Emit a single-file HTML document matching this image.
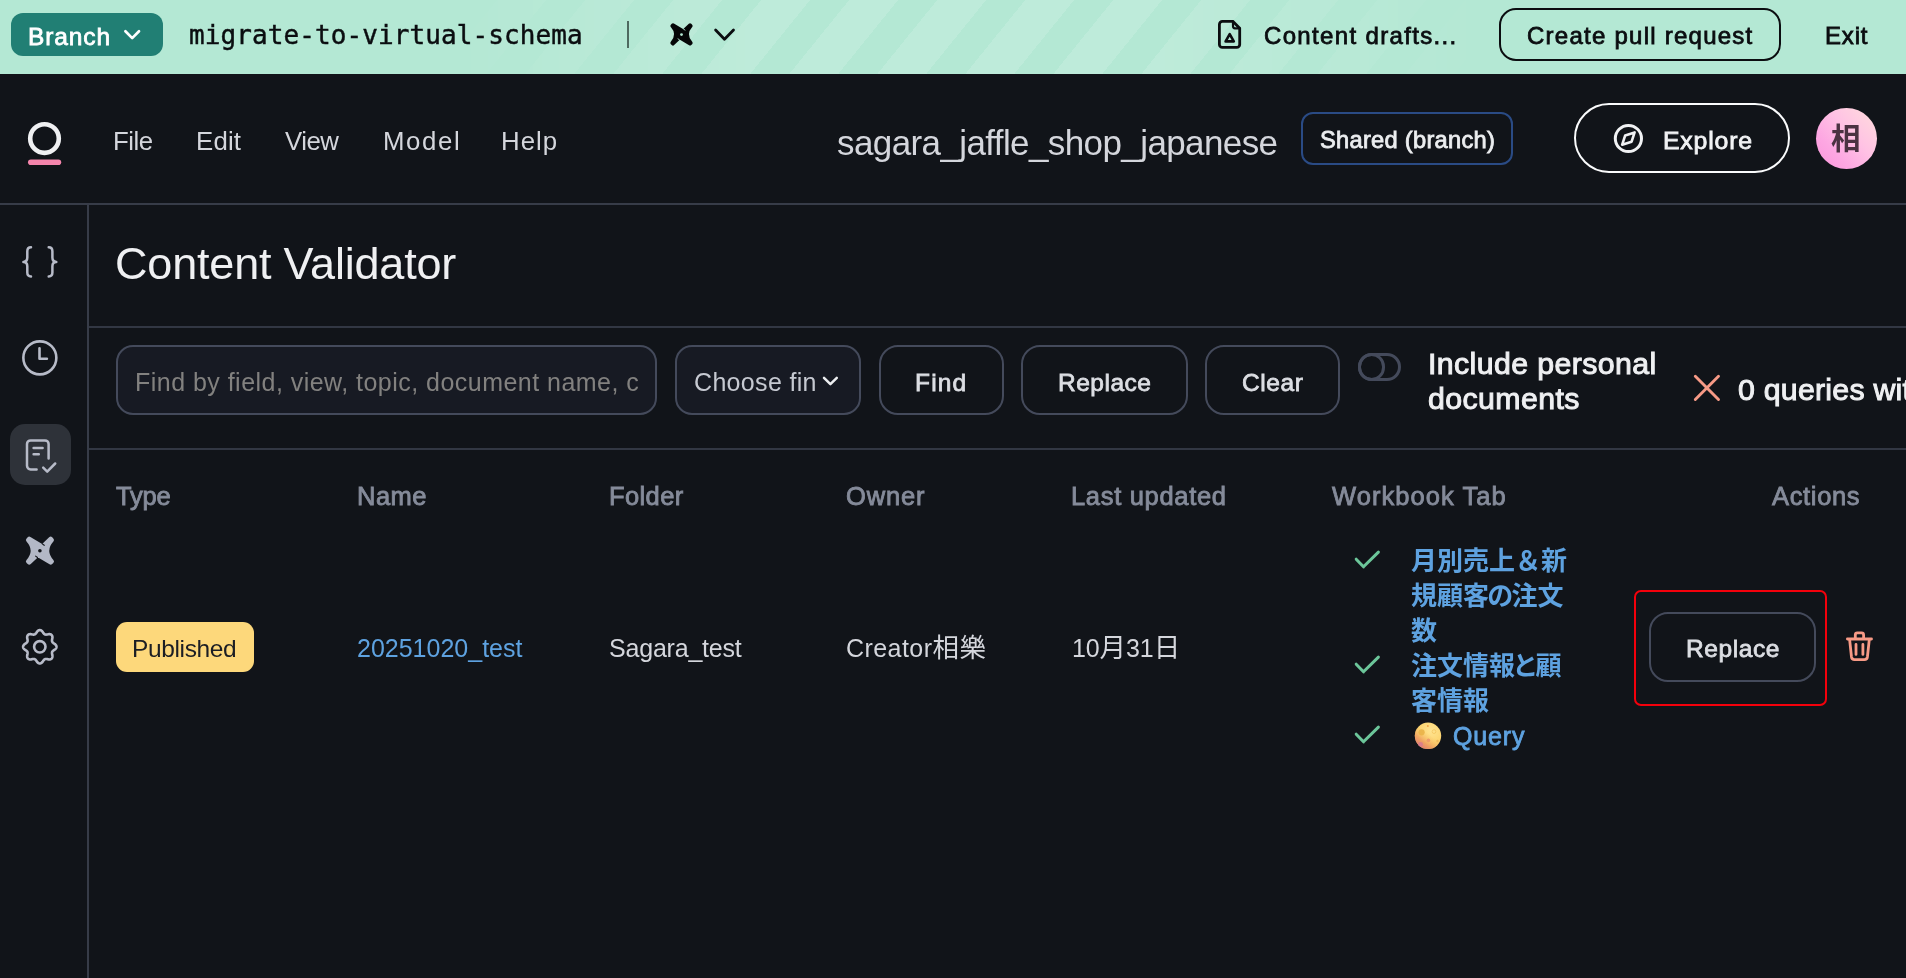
<!DOCTYPE html>
<html lang="en">
<head>
<meta charset="utf-8">
<title>Content Validator</title>
<style>
*{box-sizing:border-box;margin:0;padding:0}
html,body{width:1906px;height:978px;overflow:hidden;background:#111419}
body{font-family:"Liberation Sans","Noto Sans CJK JP",sans-serif;color:#e6e7ea;position:relative}
.abs{position:absolute;white-space:nowrap}
[id^=t_]{will-change:transform}
svg{position:absolute;left:0;top:0;overflow:visible}
.sb{font-weight:normal !important;-webkit-text-stroke:0.033em currentColor}
/* top branch bar */
#bar{position:absolute;left:0;top:0;width:1906px;height:74px;background:#b4e8d4;overflow:hidden}
#bar .stripes{position:absolute;left:440px;top:0;width:1060px;height:74px;
 background:repeating-linear-gradient(129deg,rgba(255,255,255,.14) 0 14px,rgba(255,255,255,0) 14px 44.4px,rgba(255,255,255,.14) 44.4px 68.4px);
 -webkit-mask-image:linear-gradient(90deg,transparent,#000 30%,#000 67%,transparent);mask-image:linear-gradient(90deg,transparent,#000 30%,#000 67%,transparent)}
#branch{position:absolute;left:11px;top:13px;width:152px;height:43px;border-radius:12px;background:#217f74}
#t_branch{left:28px;top:20px;font-weight:bold;font-size:24.5px;line-height:30px;color:#fff}
#t_bname{-webkit-text-stroke:0.45px #0b0d10;left:189px;top:17px;font-family:"DejaVu Sans Mono","Liberation Mono",monospace;font-size:26px;line-height:34px;color:#0b0d10}
#sep{position:absolute;left:626.6px;top:21px;width:2.2px;height:27px;background:#4e6a60}
#t_drafts{left:1264px;top:19px;font-size:24px;line-height:34px;color:#0b0d10;font-weight:bold}
#pr{position:absolute;left:1499px;top:8px;width:282px;height:53px;border:2px solid #0b0d10;border-radius:17px}
#t_pr{left:1527px;top:19px;font-size:24px;line-height:34px;color:#0b0d10;font-weight:bold}
#t_exit{left:1825px;top:19px;font-size:24px;line-height:34px;color:#0b0d10;font-weight:bold}
/* header */
#hdr{position:absolute;left:0;top:74px;width:1906px;height:131px;background:#111419;border-bottom:2px solid #373c48}
.menu{top:123px;font-size:25.5px;line-height:34px;color:#d4d6dc}
#t_title{left:837px;top:120px;font-size:34px;line-height:44px;color:#d4d6dc}
#shared{position:absolute;left:1301px;top:112px;width:212px;height:53px;border:2px solid #2a4b85;border-radius:12px}
#t_shared{left:1320px;top:123px;font-size:23.5px;line-height:30px;font-weight:bold;color:#eceef0}
#explore{position:absolute;left:1574px;top:103px;width:216px;height:70px;border:2px solid #fafbfc;border-radius:35px}
#t_explore{left:1663px;top:122px;font-size:25px;line-height:32px;font-weight:bold;color:#f1f2f4}
#avatar{position:absolute;left:1816px;top:108px;width:61px;height:61px;border-radius:50%;background:linear-gradient(48deg,#fb95db 0%,#fda6e2 28%,#ffc2e4 58%,#ffd4df 85%)}
#t_av{left:1831px;top:120.3px;font-size:29.5px;line-height:38px;color:#4b3242;font-weight:700}
/* sidebar */
#side{position:absolute;left:0;top:205px;width:89px;height:773px;border-right:2px solid #373c48}
#active{position:absolute;left:10px;top:424px;width:61px;height:61px;border-radius:15px;background:#2e3239}
/* content */
#t_incl{left:1427px;top:347px;font-size:30px}
#t_q{left:1736px;top:371px;font-size:30px}
#t_creator{left:846px}
#t_date{left:1071px}
#t_h1{left:114px;top:235px;font-size:44.5px;line-height:56px;color:#eff0f2}
.hr{position:absolute;left:89px;width:1817px;height:2px;background:#323743}
.field{position:absolute;top:345px;height:70px;border:2px solid #444a5b;border-radius:17px;background:#171a23}
.btn{position:absolute;top:345px;height:70px;border:2px solid #444a5b;border-radius:19px}
.bt{top:364px;font-size:25px;line-height:32px;font-weight:bold;color:#dcdee3}
.th{top:478px;font-size:25px;line-height:32px;font-weight:bold;color:#858b9a}
.td{top:631px;font-size:25px;line-height:32px;color:#d4d6dc}
.cj{font-size:26.5px}
.k1{margin:0 -1.8px}.k2{margin:0 -2.8px}
.lnk{font-size:26px;line-height:35px;font-weight:bold;color:#5ea2e0}
/*FIT*/
#t_branch{left:28.0px;top:21.5px;font-size:24.5px;letter-spacing:0.9px}
#t_drafts{left:1264.0px;top:19.4px;font-size:24px;letter-spacing:1.34px}
#t_pr{left:1527.0px;top:19.3px;font-size:24px;letter-spacing:1.25px}
#t_exit{left:1825.0px;top:19.3px;font-size:24px;letter-spacing:0.83px}
#t_shared{left:1320.2px;top:125px;font-size:23.7px;letter-spacing:0.27px}
#t_explore{left:1663.0px;top:125px;font-size:24.8px;letter-spacing:0.83px}
#t_find{left:915.0px;top:366.7px;font-size:24.5px;letter-spacing:1.17px}
#t_replace{left:1058.0px;top:366.7px;font-size:24.5px;letter-spacing:0.5px}
#t_clear{left:1241.5px;top:366.7px;font-size:24.5px;letter-spacing:0.61px}
#t_type{left:116.0px;top:479.5px;font-size:25.5px;letter-spacing:-0.17px}
#t_name{left:356.5px;top:479.5px;font-size:25.5px;letter-spacing:0.5px}
#t_folder{left:608.5px;top:479.5px;font-size:25.5px;letter-spacing:0.4px}
#t_owner{left:846.0px;top:479.5px;font-size:25.5px;letter-spacing:0.86px}
#t_last{left:1071.0px;top:479.5px;font-size:25.5px;letter-spacing:0.69px}
#t_wb{left:1331.5px;top:479.5px;font-size:25.5px;letter-spacing:1.05px}
#t_actions{left:1771.5px;top:479.5px;font-size:25.5px;letter-spacing:0.66px}
#t_query{left:1453.0px;top:718.8px;font-size:25px;letter-spacing:0.86px}
#t_replace2{left:1685.5px;top:632.7px;font-size:24.5px;letter-spacing:0.58px}
#t_incl{left:1428.0px;top:346.3px;font-size:30.3px;letter-spacing:0.4px}
#t_q{left:1737.5px;top:371.9px;font-size:30.3px;letter-spacing:0.24px}
#t_bname{left:189.0px;top:18.1px;font-size:26px;letter-spacing:0.1px}
#t_creator{left:846.0px;top:631.7px;font-size:25px;letter-spacing:0.44px}
#t_date{left:1072.0px;top:631.7px;font-size:25px;letter-spacing:-0.1px}
#t_file{left:113.0px;top:124.2px;font-size:25.8px;letter-spacing:-0.5px}
#t_edit{left:196.0px;top:124.2px;font-size:25.8px;letter-spacing:0.17px}
#t_view{left:285.0px;top:124.2px;font-size:25.8px;letter-spacing:-0.5px}
#t_model{left:382.5px;top:124.2px;font-size:25.8px;letter-spacing:1.62px}
#t_help{left:500.5px;top:124.2px;font-size:25.8px;letter-spacing:1.0px}
#t_title{left:837.0px;top:121px;font-size:35px;letter-spacing:-0.6px}
#t_h1{left:114.5px;top:236.2px;font-size:45px;letter-spacing:-0.19px}
#t_ph{left:134.5px;top:366.2px;font-size:25px;letter-spacing:0.47px}
#t_choose{left:694.0px;top:366.2px;font-size:25px;letter-spacing:0.33px}
#t_pub{left:132.0px;top:633px;font-size:24.5px;letter-spacing:-0.37px}
#t_docname{left:356.5px;top:632px;font-size:25px;letter-spacing:-0.0px}
#t_sagara{left:608.5px;top:632px;font-size:25px;letter-spacing:-0.2px}
/*ENDFIT*/
</style>
</head>
<body>
<div id="bar">
  <div class="stripes"></div>
  <div id="branch"></div>
  <div id="t_branch" class="sb abs">Branch</div>
  <div id="t_bname" class="abs">migrate-to-virtual-schema</div>
  <div id="sep"></div>
  <div id="t_drafts" class="sb abs">Content drafts...</div>
  <div id="pr"></div>
  <div id="t_pr" class="sb abs">Create pull request</div>
  <div id="t_exit" class="sb abs">Exit</div>
</div>
<div id="hdr"></div>
<div id="t_file" class="abs menu">File</div>
<div id="t_edit" class="abs menu">Edit</div>
<div id="t_view" class="abs menu">View</div>
<div id="t_model" class="abs menu">Model</div>
<div id="t_help" class="abs menu">Help</div>
<div id="t_title" class="abs">sagara_jaffle_shop_japanese</div>
<div id="shared"></div>
<div id="t_shared" class="sb abs">Shared (branch)</div>
<div id="explore"></div>
<div id="t_explore" class="sb abs">Explore</div>
<div id="avatar"></div>
<div id="t_av" class="abs">相</div>
<div id="side"></div>
<div id="active"></div>
<div id="t_h1" class="abs">Content Validator</div>
<div class="hr" style="top:326px"></div>
<div class="hr" style="top:448px"></div>
<div class="field" style="left:116px;width:541px"></div>
<div id="t_ph" class="abs" style="line-height:32px;color:#82817f">Find by field, view, topic, document name, c</div>
<div class="field" style="left:675px;width:186px"></div>
<div id="t_choose" class="abs" style="line-height:32px;color:#c6c9d1">Choose fin</div>
<div class="btn" style="left:879px;width:125px"></div>
<div id="t_find" class="sb abs bt">Find</div>
<div class="btn" style="left:1021px;width:167px"></div>
<div id="t_replace" class="sb abs bt">Replace</div>
<div class="btn" style="left:1205px;width:135px"></div>
<div id="t_clear" class="sb abs bt">Clear</div>
<div id="toggle" class="abs" style="left:1358px;top:352.8px;width:43.4px;height:28px;border:3px solid #444a5b;border-radius:14px"></div>
<div class="abs" style="left:1358px;top:352.8px;width:27.2px;height:28px;border:3px solid #444a5b;border-radius:14px"></div>
<div id="t_incl" class="sb abs" style="line-height:35px;font-weight:bold;color:#eff0f2">Include personal<br>documents</div>
<div id="t_q" class="sb abs" style="line-height:36px;font-weight:bold;color:#eff0f2">0 queries with errors</div>
<div id="t_type" class="sb abs th">Type</div>
<div id="t_name" class="sb abs th">Name</div>
<div id="t_folder" class="sb abs th">Folder</div>
<div id="t_owner" class="sb abs th">Owner</div>
<div id="t_last" class="sb abs th">Last updated</div>
<div id="t_wb" class="sb abs th">Workbook Tab</div>
<div id="t_actions" class="sb abs th">Actions</div>
<div class="abs" style="left:116px;top:622px;width:138px;height:50px;border-radius:11px;background:#fdd87b"></div>
<div id="t_pub" class="abs" style="line-height:32px;color:#1c1e24">Published</div>
<div id="t_docname" class="abs td" style="color:#5ea2e0">20251020_test</div>
<div id="t_sagara" class="abs td">Sagara_test</div>
<div id="t_creator" class="abs td">Creator<span class="cj">相樂</span></div>
<div id="t_date" class="abs td">10<span class="cj">月</span>31<span class="cj">日</span></div>
<div id="t_tabs" class="abs lnk" style="left:1410.5px;top:544.2px">月別売上＆新<br>規顧客<span class="k1">の</span>注文<br>数<br>注文情報<span class="k2">と</span>顧<br>客情報</div>
<div id="t_query" class="sb abs lnk">Query</div>
<div class="abs" style="left:1633.5px;top:589.6px;width:193.3px;height:116px;border:2.2px solid #f4000b;border-radius:7px"></div>
<div class="btn" style="left:1649px;top:612px;width:167px"></div>
<div id="t_replace2" class="sb abs bt">Replace</div>

<svg width="1906" height="978" viewBox="0 0 1906 978">
 <defs>
  <radialGradient id="moon" cx="0.62" cy="0.3" r="0.85"><stop offset="0" stop-color="#ffe492"/><stop offset="0.5" stop-color="#fdd673"/><stop offset="1" stop-color="#f5bf5c"/></radialGradient>
  <linearGradient id="moonsh" x1="0.18" y1="0.98" x2="0.68" y2="0.3"><stop offset="0" stop-color="#dd6f7c" stop-opacity=".95"/><stop offset="0.33" stop-color="#ec9460" stop-opacity=".78"/><stop offset="0.78" stop-color="#f6bd62" stop-opacity="0"/></linearGradient>
 </defs>
 <!-- branch chevron -->
 <path d="M125.4 31.3 L132.2 38.1 L139 31.3" fill="none" stroke="#fff" stroke-width="2.7" stroke-linecap="round" stroke-linejoin="round"/>
 <!-- dbt top -->
 <path d="M672.98 25.00 L683.41 31.29 L690.02 25.00 L690.90 25.88 Q683.25 34.40 690.90 42.92 L690.02 43.80 L679.59 37.51 L672.98 43.80 L672.10 42.92 Q679.75 34.40 672.10 25.88Z" fill="#050607" stroke="#050607" stroke-width="3.50" stroke-linejoin="round"/>
 <path d="M683.4 28.9 L685 30.1 M679.6 40 L678 38.8" fill="none" stroke="#b4e8d4" stroke-width="0.9" stroke-linecap="round"/>
 <circle cx="681.5" cy="34.6" r="1.4" fill="#b4e8d4"/>
 <path d="M715.6 30 L724.5 39.2 L733.5 30" fill="none" stroke="#0b0d10" stroke-width="2.8" stroke-linecap="round" stroke-linejoin="round"/>
 <!-- doc icon top -->
 <g fill="none" stroke="#0b0d10" stroke-width="2.8" stroke-linejoin="round" stroke-linecap="round">
  <path d="M1233 21.4 H1222.4 a3 3 0 0 0 -3 3 V44.4 a3 3 0 0 0 3 3 H1236.7 a3 3 0 0 0 3 -3 V28.3 Z"/>
  <path d="M1233 21.4 V26.3 a2 2 0 0 0 2 2 H1239.7" stroke-width="2.2"/>
  <path d="M1229.7 34.2 L1233.8 41.4 H1225.6 Z" stroke-width="2.6"/>
 </g>
 <!-- logo -->
 <circle cx="44.5" cy="138.6" r="14.3" fill="none" stroke="#eff0f2" stroke-width="4.6"/>
 <rect x="28" y="159.5" width="33.2" height="5.6" rx="2.8" fill="#f585ac"/>
 <!-- compass -->
 <circle cx="1628.4" cy="138.5" r="13.1" fill="none" stroke="#f1f2f4" stroke-width="3"/>
 <path d="M1634.6 132.4 L1631.6 141.7 L1622.2 144.7 L1625.2 135.4 Z" fill="none" stroke="#f1f2f4" stroke-width="2.6" stroke-linejoin="round"/>
 <!-- sidebar icons -->
 <g fill="none" stroke="#b7bbc8" stroke-width="2.5" stroke-linecap="round" stroke-linejoin="round">
  <path d="M31 247.3 C28.4 247.3 27.3 248.6 27.3 251.2 V257.6 C27.3 260.2 25.9 261.9 23.4 261.9 C25.9 261.9 27.3 263.6 27.3 266.2 V272.6 C27.3 275.2 28.4 276.5 31 276.5"/>
  <path d="M48.7 247.3 C51.3 247.3 52.4 248.6 52.4 251.2 V257.6 C52.4 260.2 53.8 261.9 56.3 261.9 C53.8 261.9 52.4 263.6 52.4 266.2 V272.6 C52.4 275.2 51.3 276.5 48.7 276.5"/>
  <circle cx="39.85" cy="357.85" r="16.5" stroke-width="2.6"/>
  <path d="M39.5 348.2 V358.8 H46.9" stroke-width="2.6"/>
  <path d="M36.6 469.4 H30.6 a3.6 3.6 0 0 1 -3.6 -3.6 V444 a3.6 3.6 0 0 1 3.6 -3.6 H45 a3.6 3.6 0 0 1 3.6 3.6 V458.6"/>
  <path d="M33.6 447.9 H42.6 M33.6 454.2 H38.8"/>
  <path d="M43.2 467.7 L47.2 471.6 L55.2 463.5"/>
  <path d="M39.80 630.10 L40.24 630.14 L40.67 630.25 L41.09 630.44 L41.49 630.70 L41.88 631.01 L42.24 631.37 L42.58 631.78 L42.88 632.30 L43.18 632.72 L43.47 633.11 L43.75 633.46 L44.03 633.78 L44.32 634.04 L44.61 634.26 L44.93 634.42 L45.26 634.53 L45.63 634.59 L46.02 634.60 L46.44 634.58 L46.89 634.53 L47.37 634.45 L47.87 634.37 L48.45 634.21 L48.98 634.16 L49.50 634.16 L49.99 634.22 L50.46 634.32 L50.89 634.49 L51.27 634.71 L51.61 634.99 L51.89 635.33 L52.11 635.71 L52.28 636.14 L52.38 636.61 L52.44 637.10 L52.44 637.62 L52.39 638.15 L52.23 638.73 L52.15 639.23 L52.07 639.71 L52.02 640.16 L52.00 640.58 L52.01 640.97 L52.07 641.34 L52.18 641.67 L52.34 641.99 L52.56 642.28 L52.82 642.57 L53.14 642.85 L53.49 643.13 L53.88 643.42 L54.30 643.72 L54.82 644.02 L55.23 644.36 L55.59 644.72 L55.90 645.11 L56.16 645.51 L56.35 645.93 L56.46 646.36 L56.50 646.80 L56.46 647.24 L56.35 647.67 L56.16 648.09 L55.90 648.49 L55.59 648.88 L55.23 649.24 L54.82 649.58 L54.30 649.88 L53.88 650.18 L53.49 650.47 L53.14 650.75 L52.82 651.03 L52.56 651.32 L52.34 651.61 L52.18 651.93 L52.07 652.26 L52.01 652.63 L52.00 653.02 L52.02 653.44 L52.07 653.89 L52.15 654.37 L52.23 654.87 L52.39 655.45 L52.44 655.98 L52.44 656.50 L52.38 656.99 L52.28 657.46 L52.11 657.89 L51.89 658.27 L51.61 658.61 L51.27 658.89 L50.89 659.11 L50.46 659.28 L49.99 659.38 L49.50 659.44 L48.98 659.44 L48.45 659.39 L47.87 659.23 L47.37 659.15 L46.89 659.07 L46.44 659.02 L46.02 659.00 L45.63 659.01 L45.26 659.07 L44.93 659.18 L44.61 659.34 L44.32 659.56 L44.03 659.82 L43.75 660.14 L43.47 660.49 L43.18 660.88 L42.88 661.30 L42.58 661.82 L42.24 662.23 L41.88 662.59 L41.49 662.90 L41.09 663.16 L40.67 663.35 L40.24 663.46 L39.80 663.50 L39.36 663.46 L38.93 663.35 L38.51 663.16 L38.11 662.90 L37.72 662.59 L37.36 662.23 L37.02 661.82 L36.72 661.30 L36.42 660.88 L36.13 660.49 L35.85 660.14 L35.57 659.82 L35.28 659.56 L34.99 659.34 L34.67 659.18 L34.34 659.07 L33.97 659.01 L33.58 659.00 L33.16 659.02 L32.71 659.07 L32.23 659.15 L31.73 659.23 L31.15 659.39 L30.62 659.44 L30.10 659.44 L29.61 659.38 L29.14 659.28 L28.71 659.11 L28.33 658.89 L27.99 658.61 L27.71 658.27 L27.49 657.89 L27.32 657.46 L27.22 656.99 L27.16 656.50 L27.16 655.98 L27.21 655.45 L27.37 654.87 L27.45 654.37 L27.53 653.89 L27.58 653.44 L27.60 653.02 L27.59 652.63 L27.53 652.26 L27.42 651.93 L27.26 651.61 L27.04 651.32 L26.78 651.03 L26.46 650.75 L26.11 650.47 L25.72 650.18 L25.30 649.88 L24.78 649.58 L24.37 649.24 L24.01 648.88 L23.70 648.49 L23.44 648.09 L23.25 647.67 L23.14 647.24 L23.10 646.80 L23.14 646.36 L23.25 645.93 L23.44 645.51 L23.70 645.11 L24.01 644.72 L24.37 644.36 L24.78 644.02 L25.30 643.72 L25.72 643.42 L26.11 643.13 L26.46 642.85 L26.78 642.57 L27.04 642.28 L27.26 641.99 L27.42 641.67 L27.53 641.34 L27.59 640.97 L27.60 640.58 L27.58 640.16 L27.53 639.71 L27.45 639.23 L27.37 638.73 L27.21 638.15 L27.16 637.62 L27.16 637.10 L27.22 636.61 L27.32 636.14 L27.49 635.71 L27.71 635.33 L27.99 634.99 L28.33 634.71 L28.71 634.49 L29.14 634.32 L29.61 634.22 L30.10 634.16 L30.62 634.16 L31.15 634.21 L31.73 634.37 L32.23 634.45 L32.71 634.53 L33.16 634.58 L33.58 634.60 L33.97 634.59 L34.34 634.53 L34.67 634.42 L34.99 634.26 L35.28 634.04 L35.57 633.78 L35.85 633.46 L36.13 633.11 L36.42 632.72 L36.72 632.30 L37.02 631.78 L37.36 631.37 L37.72 631.01 L38.11 630.70 L38.51 630.44 L38.93 630.25 L39.36 630.14Z" stroke-width="2.6"/>
  <circle cx="39.8" cy="646.8" r="5.7" stroke-width="2.6"/>
 </g>
 <path d="M29.25 538.85 L42.35 546.75 L50.65 538.85 L51.75 539.95 Q42.15 550.65 51.75 561.35 L50.65 562.45 L37.55 554.55 L29.25 562.45 L28.15 561.35 Q37.75 550.65 28.15 539.95Z" fill="#b3b8c6" stroke="#b3b8c6" stroke-width="4.40" stroke-linejoin="round"/>
 <path d="M42.3 543.9 L44.2 545.3 M37.5 557.5 L35.6 556.1" fill="none" stroke="#111419" stroke-width="1.1" stroke-linecap="round"/>
 <circle cx="39.9" cy="550.75" r="1.8" fill="#111419"/>
 <!-- select chevron -->
 <path d="M824 377.8 L830.4 384.2 L836.8 377.8" fill="none" stroke="#eceef0" stroke-width="2.5" stroke-linecap="round" stroke-linejoin="round"/>
 <!-- X mark -->
 <path d="M1695.3 376.3 L1718.5 399.5 M1718.5 376.3 L1695.3 399.5" fill="none" stroke="#f79a86" stroke-width="2.9" stroke-linecap="round"/>
 <!-- checks -->
 <g fill="none" stroke="#6cc69a" stroke-width="3" stroke-linecap="round" stroke-linejoin="round">
  <path d="M1356.2 559.2 L1363.5 566.8 L1378.4 552.1"/>
  <path d="M1356.2 664.2 L1363.5 671.8 L1378.4 657.1"/>
  <path d="M1356.2 734.2 L1363.5 741.8 L1378.4 727.1"/>
 </g>
 <!-- moon -->
 <g role="img" aria-label="🌕">
 <circle cx="1428" cy="735.8" r="13.2" fill="url(#moon)"/>
 <circle cx="1428" cy="735.8" r="13.2" fill="url(#moonsh)"/>
 <circle cx="1421.6" cy="732.3" r="3.1" fill="#e9b348" opacity=".9"/>
 <circle cx="1427.8" cy="726" r="1" fill="#eea64a"/>
 <circle cx="1434" cy="731.6" r="1.9" fill="none" stroke="#f3c35c" stroke-width="0.9" opacity=".8"/>
 <circle cx="1428.4" cy="740.4" r="1.8" fill="#ee9c6c"/>
 <circle cx="1420.6" cy="744.3" r="2.4" fill="#d87a8e" opacity=".85"/>
 <circle cx="1437.5" cy="741" r="1.2" fill="#eeb355" opacity=".8"/>
 </g>
 <!-- trash -->
 <g fill="none" stroke="#f79a86" stroke-width="2.8" stroke-linecap="round" stroke-linejoin="round">
  <path d="M1847.4 639 H1871.5"/>
  <path d="M1855.3 638.6 V634.9 a2 2 0 0 1 2 -2 H1861.6 a2 2 0 0 1 2 2 V638.6"/>
  <path d="M1849.6 639.4 L1851.5 657 a3 3 0 0 0 3 2.6 H1864.4 a3 3 0 0 0 3 -2.6 L1869.3 639.4"/>
  <path d="M1856 644.4 V654.4 M1862.9 644.4 V654.4"/>
 </g>
</svg>
</body>
</html>
